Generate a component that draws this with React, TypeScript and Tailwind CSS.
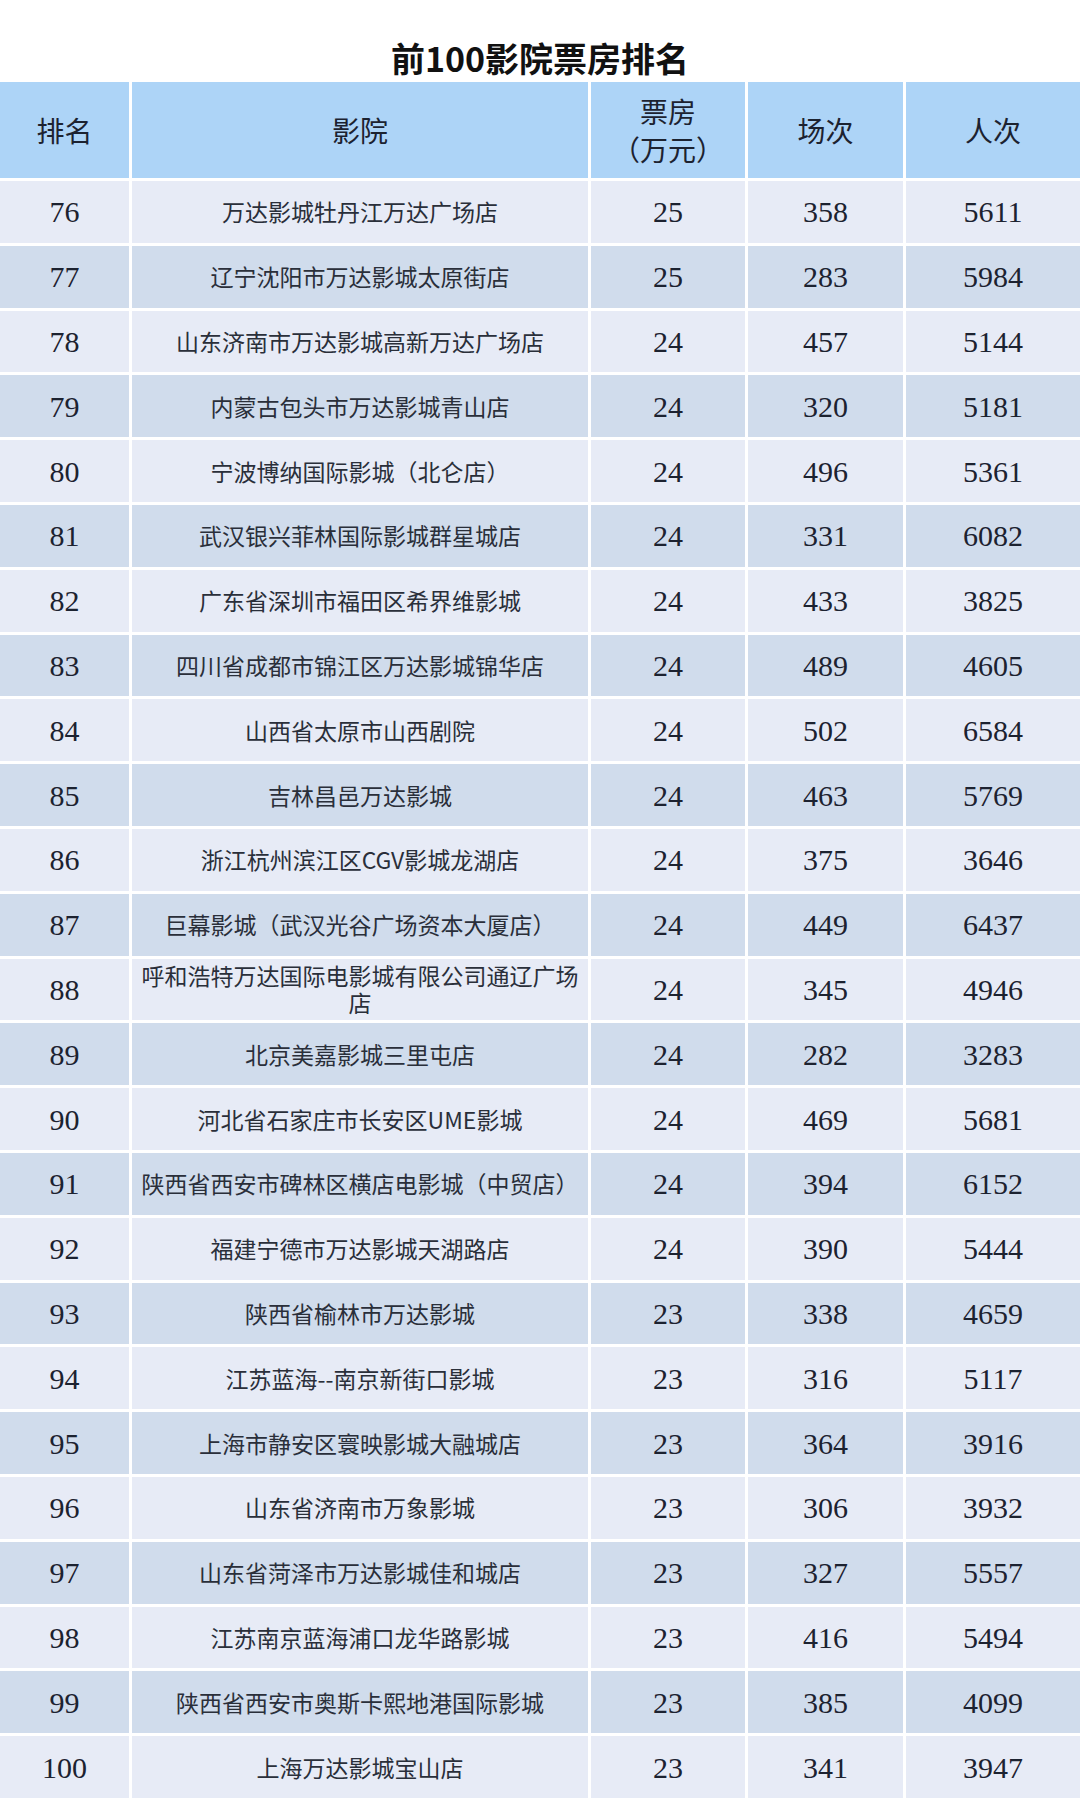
const rows: [number, string, number, number, number][] = [
  [76, "万达影城牡丹江万达广场店", 25, 358, 5611],
  [77, "辽宁沈阳市万达影城太原街店", 25, 283, 5984],
  [78, "山东济南市万达影城高新万达广场店", 24, 457, 5144],
  [79, "内蒙古包头市万达影城青山店", 24, 320, 5181],
  [80, "宁波博纳国际影城（北仑店）", 24, 496, 5361],
  [81, "武汉银兴菲林国际影城群星城店", 24, 331, 6082],
  [82, "广东省深圳市福田区希界维影城", 24, 433, 3825],
  [83, "四川省成都市锦江区万达影城锦华店", 24, 489, 4605],
  [84, "山西省太原市山西剧院", 24, 502, 6584],
  [85, "吉林昌邑万达影城", 24, 463, 5769],
  [86, "浙江杭州滨江区CGV影城龙湖店", 24, 375, 3646],
  [87, "巨幕影城（武汉光谷广场资本大厦店）", 24, 449, 6437],
  [88, "呼和浩特万达国际电影城有限公司通辽广场店", 24, 345, 4946],
  [89, "北京美嘉影城三里屯店", 24, 282, 3283],
  [90, "河北省石家庄市长安区UME影城", 24, 469, 5681],
  [91, "陕西省西安市碑林区横店电影城（中贸店）", 24, 394, 6152],
  [92, "福建宁德市万达影城天湖路店", 24, 390, 5444],
  [93, "陕西省榆林市万达影城", 23, 338, 4659],
  [94, "江苏蓝海--南京新街口影城", 23, 316, 5117],
  [95, "上海市静安区寰映影城大融城店", 23, 364, 3916],
  [96, "山东省济南市万象影城", 23, 306, 3932],
  [97, "山东省菏泽市万达影城佳和城店", 23, 327, 5557],
  [98, "江苏南京蓝海浦口龙华路影城", 23, 416, 5494],
  [99, "陕西省西安市奥斯卡熙地港国际影城", 23, 385, 4099],
  [100, "上海万达影城宝山店", 23, 341, 3947],
];

const serif = "font-['Liberation_Serif','Noto_Sans_CJK_SC',serif]";

export default function App() {
  return (
    <div className="w-[1080px] h-[1800px] overflow-hidden bg-white">
      {/* Title */}
      <h1 className="h-[82px] pt-[37px] text-center text-[34px] leading-[41px] font-bold text-[#111] font-['Noto_Sans_CJK_SC',sans-serif]">
        前100影院票房排名
      </h1>

      {/* Table */}
      <div className="grid grid-cols-[129px_456px_154px_155px_174px] gap-[3px] text-[#1c2230]">
        {/* Header */}
        {["排名", "影院"].map((h) => (
          <div key={h} className="h-[96px] bg-[#add4f7] flex items-center justify-center text-[28px] font-['Noto_Sans_CJK_SC',serif]">
            {h}
          </div>
        ))}
        <div className="h-[96px] bg-[#add4f7] flex flex-col items-center justify-center text-[28px] leading-[38px] font-['Noto_Sans_CJK_SC',serif]">
          <span>票房</span>
          <span>（万元）</span>
        </div>
        {["场次", "人次"].map((h) => (
          <div key={h} className="h-[96px] bg-[#add4f7] flex items-center justify-center text-[28px] font-['Noto_Sans_CJK_SC',serif]">
            {h}
          </div>
        ))}

        {/* Body */}
        {rows.map(([rank, name, box, shows, people], i) => {
          const bg = i % 2 === 0 ? "bg-[#e7ebf6]" : "bg-[#d0dcec]";
          return [
            <div key={`${rank}-r`} className={`h-[61.8px] ${bg} flex items-center justify-center text-[30px] ${serif}`}>
              {rank}
            </div>,
            <div key={`${rank}-n`} className={`h-[61.8px] ${bg} flex items-center justify-center px-[4px] text-center text-[23px] leading-[27px] text-[#2a2f3a] font-['Noto_Sans_CJK_SC',serif]`}>
              {name}
            </div>,
            <div key={`${rank}-b`} className={`h-[61.8px] ${bg} flex items-center justify-center text-[30px] ${serif}`}>
              {box}
            </div>,
            <div key={`${rank}-s`} className={`h-[61.8px] ${bg} flex items-center justify-center text-[30px] ${serif}`}>
              {shows}
            </div>,
            <div key={`${rank}-p`} className={`h-[61.8px] ${bg} flex items-center justify-center text-[30px] ${serif}`}>
              {people}
            </div>,
          ];
        })}
      </div>
    </div>
  );
}
